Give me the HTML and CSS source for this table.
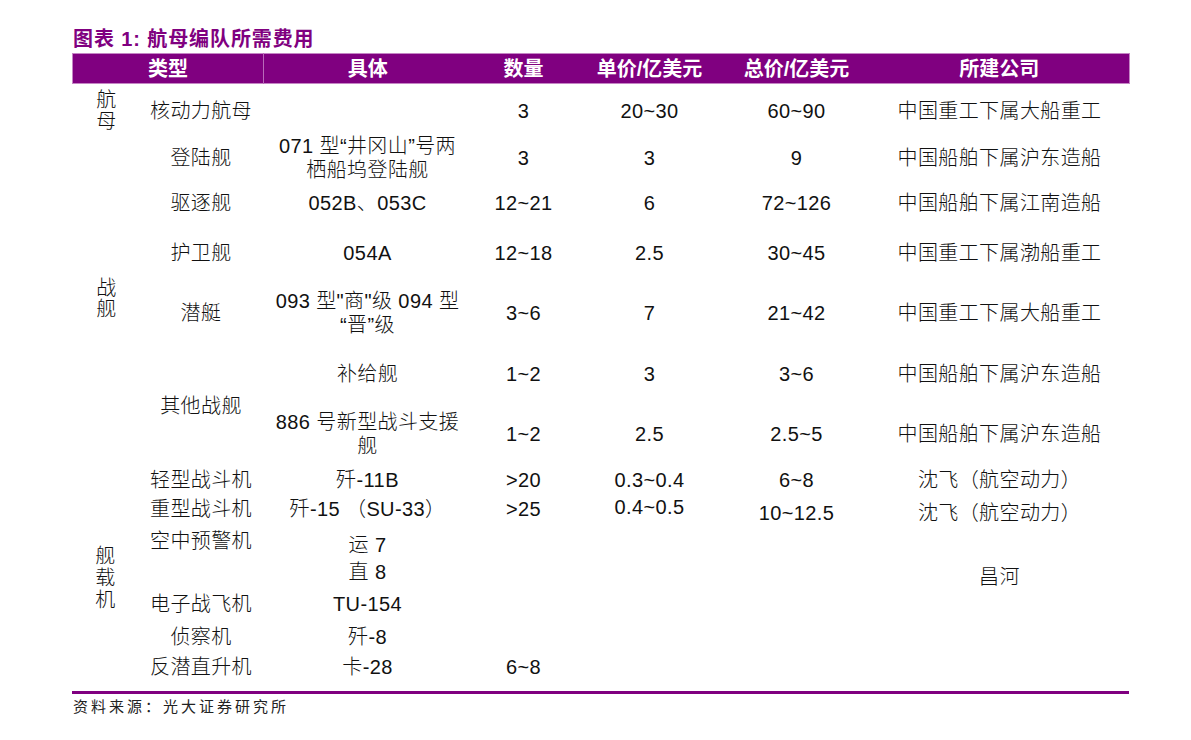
FILE: index.html
```html
<!DOCTYPE html>
<html lang="zh-CN">
<head>
<meta charset="utf-8">
<title>航母编队所需费用</title>
<link rel="stylesheet" href="styles.css">
</head>
<body>
<div class="page">
  <h1 class="title">图表 1: 航母编队所需费用</h1>
  <table class="sheet">
    <colgroup>
      <col class="w-cat"><col class="w-type"><col class="w-spec"><col class="w-qty"><col class="w-unit"><col class="w-total"><col class="w-maker">
    </colgroup>
    <thead>
      <tr class="head">
        <th colspan="2">类型</th>
        <th class="sep">具体</th>
        <th>数量</th>
        <th>单价/亿美元</th>
        <th>总价/亿美元</th>
        <th>所建公司</th>
      </tr>
    </thead>
    <tbody>
      <tr class="r1">
        <td class="cat">航<br>母</td>
        <td>核动力航母</td>
        <td></td>
        <td>3</td>
        <td>20~30</td>
        <td>60~90</td>
        <td>中国重工下属大船重工</td>
      </tr>
      <tr class="r2">
        <td class="cat" rowspan="6">战<br>舰</td>
        <td>登陆舰</td>
        <td class="multi">071 型“井冈山”号两<br>栖船坞登陆舰</td>
        <td>3</td>
        <td>3</td>
        <td>9</td>
        <td>中国船舶下属沪东造船</td>
      </tr>
      <tr class="r3">
        <td>驱逐舰</td>
        <td>052B、053C</td>
        <td>12~21</td>
        <td>6</td>
        <td>72~126</td>
        <td>中国船舶下属江南造船</td>
      </tr>
      <tr class="r4">
        <td>护卫舰</td>
        <td>054A</td>
        <td>12~18</td>
        <td>2.5</td>
        <td>30~45</td>
        <td>中国重工下属渤船重工</td>
      </tr>
      <tr class="r5">
        <td>潜艇</td>
        <td class="multi">093 型"商"级 094 型<br>“晋”级</td>
        <td>3~6</td>
        <td>7</td>
        <td>21~42</td>
        <td>中国重工下属大船重工</td>
      </tr>
      <tr class="r6">
        <td class="other" rowspan="2">其他战舰</td>
        <td>补给舰</td>
        <td>1~2</td>
        <td>3</td>
        <td>3~6</td>
        <td>中国船舶下属沪东造船</td>
      </tr>
      <tr class="r7">
        <td class="multi">886 号新型战斗支援<br>舰</td>
        <td>1~2</td>
        <td>2.5</td>
        <td>2.5~5</td>
        <td>中国船舶下属沪东造船</td>
      </tr>
      <tr class="r8">
        <td class="cat air" rowspan="7">舰<br>载<br>机</td>
        <td>轻型战斗机</td>
        <td>歼-11B</td>
        <td>&gt;20</td>
        <td>0.3~0.4</td>
        <td>6~8</td>
        <td>沈飞（航空动力）</td>
      </tr>
      <tr class="r9">
        <td>重型战斗机</td>
        <td>歼-15 （SU-33）</td>
        <td>&gt;25</td>
        <td class="up">0.4~0.5</td>
        <td class="down">10~12.5</td>
        <td class="down">沈飞（航空动力）</td>
      </tr>
      <tr class="r10">
        <td>空中预警机</td>
        <td class="down">运 7</td>
        <td></td>
        <td></td>
        <td></td>
        <td class="down" rowspan="3">昌河</td>
      </tr>
      <tr class="r11">
        <td></td>
        <td>直 8</td>
        <td></td>
        <td></td>
        <td></td>
      </tr>
      <tr class="r12">
        <td>电子战飞机</td>
        <td>TU-154</td>
        <td></td>
        <td></td>
        <td></td>
      </tr>
      <tr class="r13">
        <td>侦察机</td>
        <td>歼-8</td>
        <td></td>
        <td></td>
        <td></td>
        <td></td>
      </tr>
      <tr class="r14">
        <td>反潜直升机</td>
        <td>卡-28</td>
        <td>6~8</td>
        <td></td>
        <td></td>
        <td></td>
      </tr>
    </tbody>
  </table>
  <div class="rule"></div>
  <p class="source">资料来源：光大证券研究所</p>
</div>
</body>
</html>
```

FILE: styles.css
```css
html, body {
  margin: 0;
  padding: 0;
  background: #ffffff;
}

.page {
  padding: 27px 0 0 72px;
  width: 1057px;
  font-family: "Liberation Sans", "Noto Sans CJK SC", sans-serif;
  color: #111111;
}

.title {
  margin: 0 0 2px 1px;
  font-size: 20px;
  line-height: 24px;
  font-weight: 700;
  letter-spacing: 0.9px;
  color: #800080;
}

.sheet {
  width: 1057px;
  table-layout: fixed;
  border-collapse: collapse;
  border-spacing: 0;
}

.w-cat { width: 66px; }
.w-type { width: 125px; }
.w-spec { width: 208px; }
.w-qty { width: 104px; }
.w-unit { width: 148px; }
.w-total { width: 146px; }
.w-maker { width: 260px; }

.head {
  height: 30px;
  background: #800080;
  border: 1px solid #c585c5;
}

.head th {
  padding: 0;
  color: #ffffff;
  font-size: 20px;
  line-height: 24px;
  font-weight: 700;
  text-align: center;
  vertical-align: middle;
}

.head .sep {
  border-left: 1px solid #b96ab9;
}

.sheet td {
  padding: 0;
  text-align: center;
  vertical-align: middle;
  font-size: 20px;
  line-height: 24px;
  font-weight: 300;
  letter-spacing: 0.4px;
  white-space: nowrap;
}

.sheet td.cat {
  line-height: 21px;
  padding-left: 2px;
}

.sheet td.air {
  line-height: 22px;
  padding-top: 8px;
  padding-left: 0;
}

.sheet td.other {
  padding-top: 4px;
}

.sheet td.down {
  line-height: 18px;
  padding-top: 8px;
}

.sheet td.up {
  line-height: 20px;
  padding-bottom: 3px;
}

.r1 { height: 50px; }
.r1 td { padding-top: 4px; }
.r2 { height: 48px; }
.r3 { height: 42px; }
.r4 { height: 58px; }
.r5 { height: 62px; }
.r6 { height: 60px; }
.r7 { height: 60px; }
.r8 { height: 32px; }
.r9 { height: 26px; }
.r10 { height: 38px; }
.r11 { height: 24px; }
.r12 { height: 40px; }
.r13 { height: 26px; }
.r14 { height: 34px; }

.rule {
  margin-top: 7px;
  height: 3px;
  background: #800080;
}

.source {
  margin: 3px 0 0 1px;
  font-size: 15px;
  line-height: 20px;
  letter-spacing: 3px;
  color: #222222;
}
```
